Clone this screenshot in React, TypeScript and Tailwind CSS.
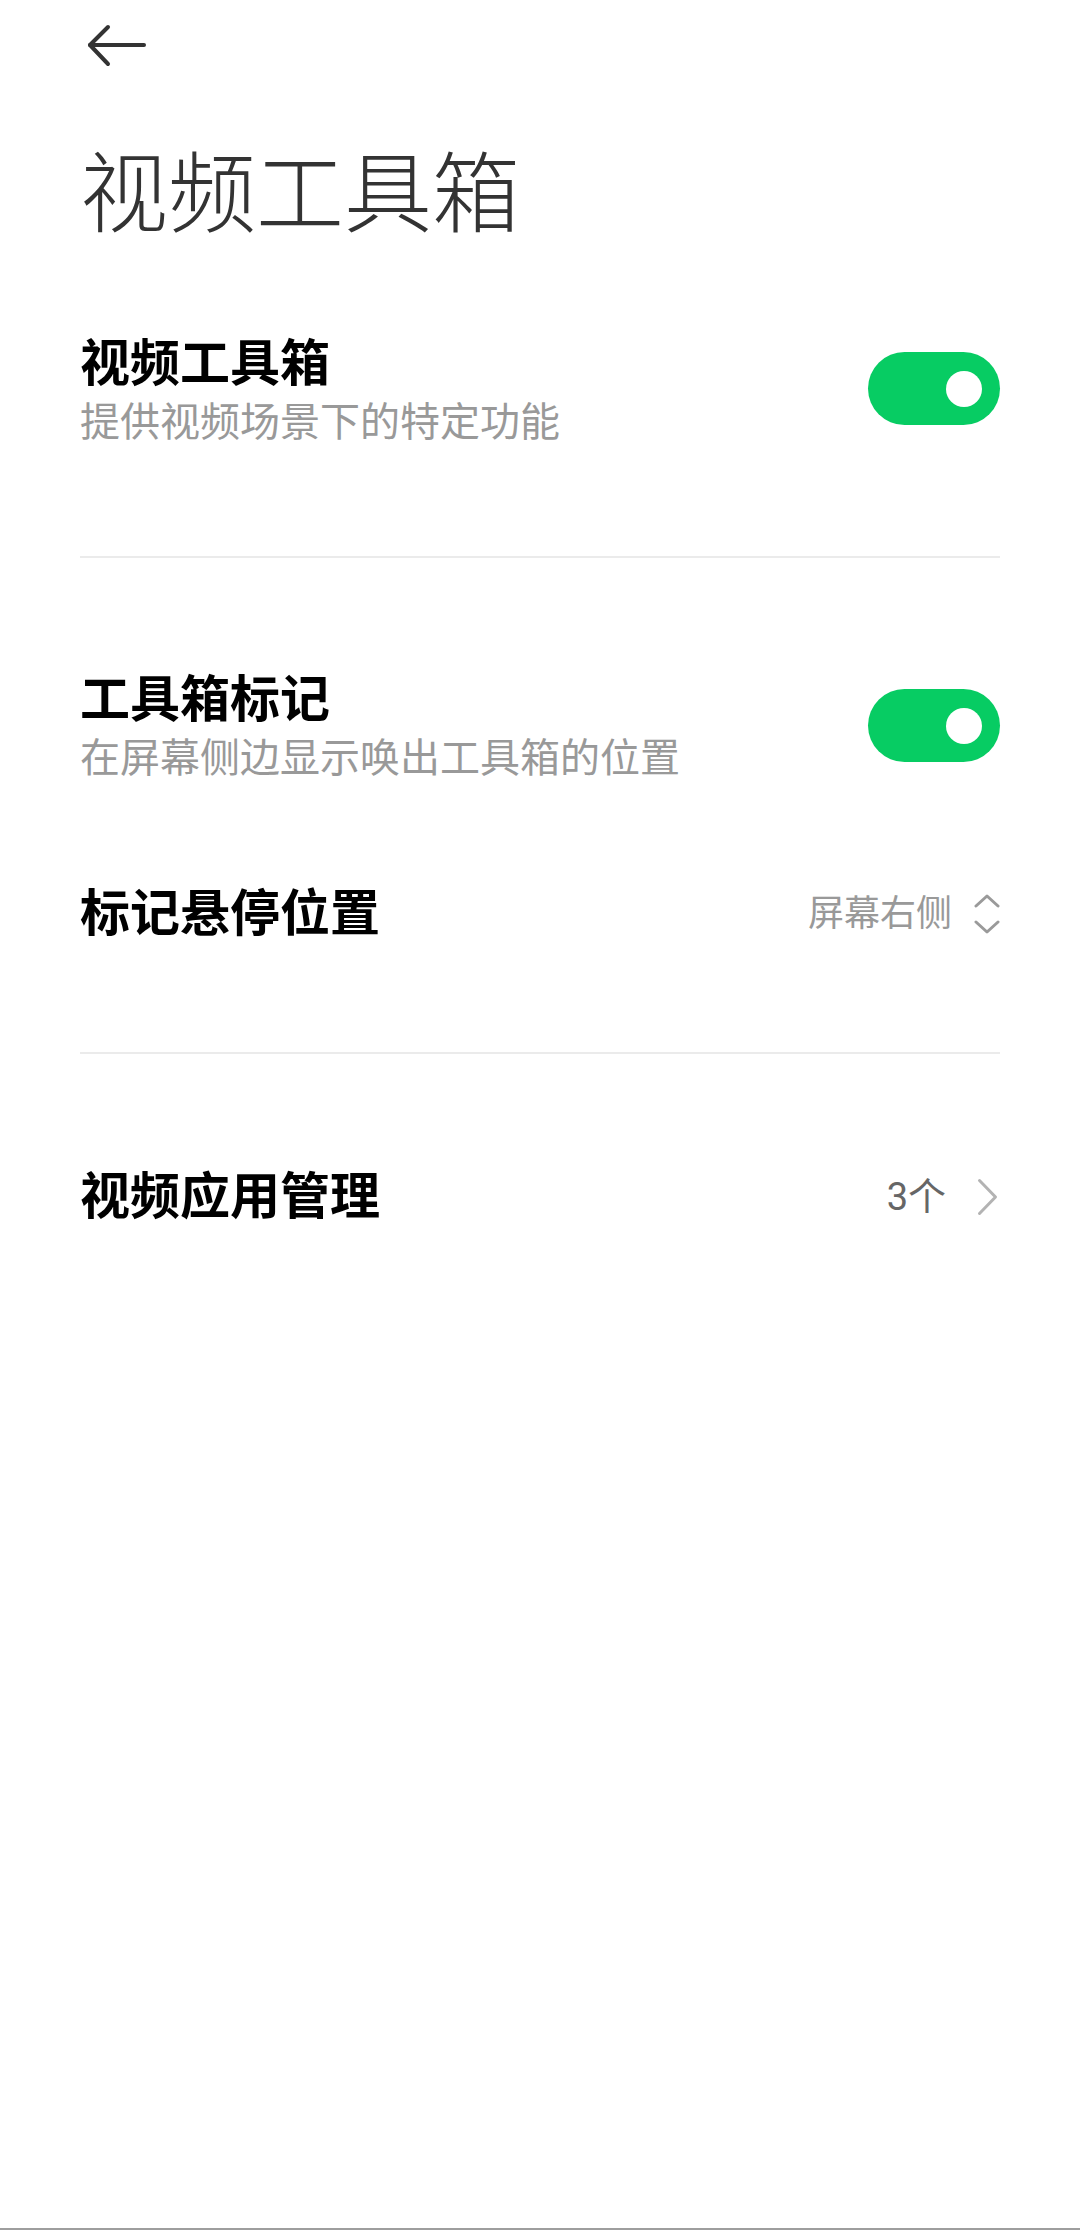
import { useState } from 'react'

const cjk = "font-['Roboto','Noto_Sans_CJK_SC',sans-serif]"

function Toggle({ on, onChange }: { on: boolean; onChange: () => void }) {
  return (
    <button
      onClick={onChange}
      className={`flex h-[73px] w-[132px] shrink-0 items-center rounded-full px-[18px] ${
        on ? 'justify-end bg-[#07cc63]' : 'justify-start bg-[#d9d9d9]'
      }`}
    >
      <span className="block h-[36px] w-[36px] rounded-full bg-white" />
    </button>
  )
}

function UpDownIcon() {
  return (
    <svg width="26" height="40" viewBox="0 0 26 40" fill="none" stroke="#9a9a9a" strokeWidth="3" strokeLinecap="round" strokeLinejoin="round">
      <polyline points="2,12 13,2 24,12" />
      <polyline points="2,28 13,38 24,28" />
    </svg>
  )
}

function ChevronRight() {
  return (
    <svg width="26" height="40" viewBox="0 0 26 40" fill="none" stroke="#b3b3b3" strokeWidth="3" strokeLinecap="round" strokeLinejoin="round">
      <polyline points="5.5,3.5 21.5,20 5.5,36.5" />
    </svg>
  )
}

export default function App() {
  const [toolbox, setToolbox] = useState(true)
  const [marker, setMarker] = useState(true)

  return (
    <div className={`flex min-h-[2230px] w-[1080px] flex-col bg-white ${cjk}`}>
      <div className="px-[80px]">
        {/* header */}
        <div className="flex h-[90px] items-start pt-[24px] pl-[6px]">
          <svg width="62" height="44" viewBox="0 0 62 44" fill="none" stroke="#333333" strokeWidth="4" strokeLinecap="round" strokeLinejoin="round">
            <line x1="4" y1="21" x2="58" y2="21" />
            <polyline points="22,3 4,21 22,40" />
          </svg>
        </div>

        <h1 className="mt-[61px] h-[88px] text-[88px] leading-[88px] font-light text-[#333333]">视频工具箱</h1>

        {/* 视频工具箱 */}
        <div className="mt-[97px] flex items-start justify-between">
          <div className="flex flex-col">
            <span className="h-[56px] text-[50px] leading-[56px] font-semibold text-black">视频工具箱</span>
            <span className="mt-[7px] h-[48px] text-[40px] leading-[48px] text-[#999999]">提供视频场景下的特定功能</span>
          </div>
          <div className="mt-[16px]">
            <Toggle on={toolbox} onChange={() => setToolbox(!toolbox)} />
          </div>
        </div>

        <div className="mt-[109px] h-[2px] bg-[#ebebeb]" />

        {/* 工具箱标记 */}
        <div className="mt-[114px] flex items-start justify-between">
          <div className="flex flex-col">
            <span className="h-[56px] text-[50px] leading-[56px] font-semibold text-black">工具箱标记</span>
            <span className="mt-[7px] h-[48px] text-[40px] leading-[48px] text-[#999999]">在屏幕侧边显示唤出工具箱的位置</span>
          </div>
          <div className="mt-[17px]">
            <Toggle on={marker} onChange={() => setMarker(!marker)} />
          </div>
        </div>

        {/* 标记悬停位置 */}
        <div className="mt-[103px] flex h-[56px] items-center justify-between">
          <span className="text-[50px] leading-[56px] font-semibold text-black">标记悬停位置</span>
          <div className="flex items-center gap-[22px]">
            <span className="text-[36px] leading-[44px] text-[#999999]">屏幕右侧</span>
            <UpDownIcon />
          </div>
        </div>

        <div className="mt-[110px] h-[2px] bg-[#ebebeb]" />

        {/* 视频应用管理 */}
        <div className="mt-[115px] flex h-[56px] items-center justify-between">
          <span className="text-[50px] leading-[56px] font-semibold text-black">视频应用管理</span>
          <div className="flex items-center gap-[28px]">
            <span className="text-[38px] leading-[44px] text-[#666666]">3个</span>
            <ChevronRight />
          </div>
        </div>
      </div>

      <div className="mt-auto h-[2px] bg-[#9e9e9e]" />
    </div>
  )
}
